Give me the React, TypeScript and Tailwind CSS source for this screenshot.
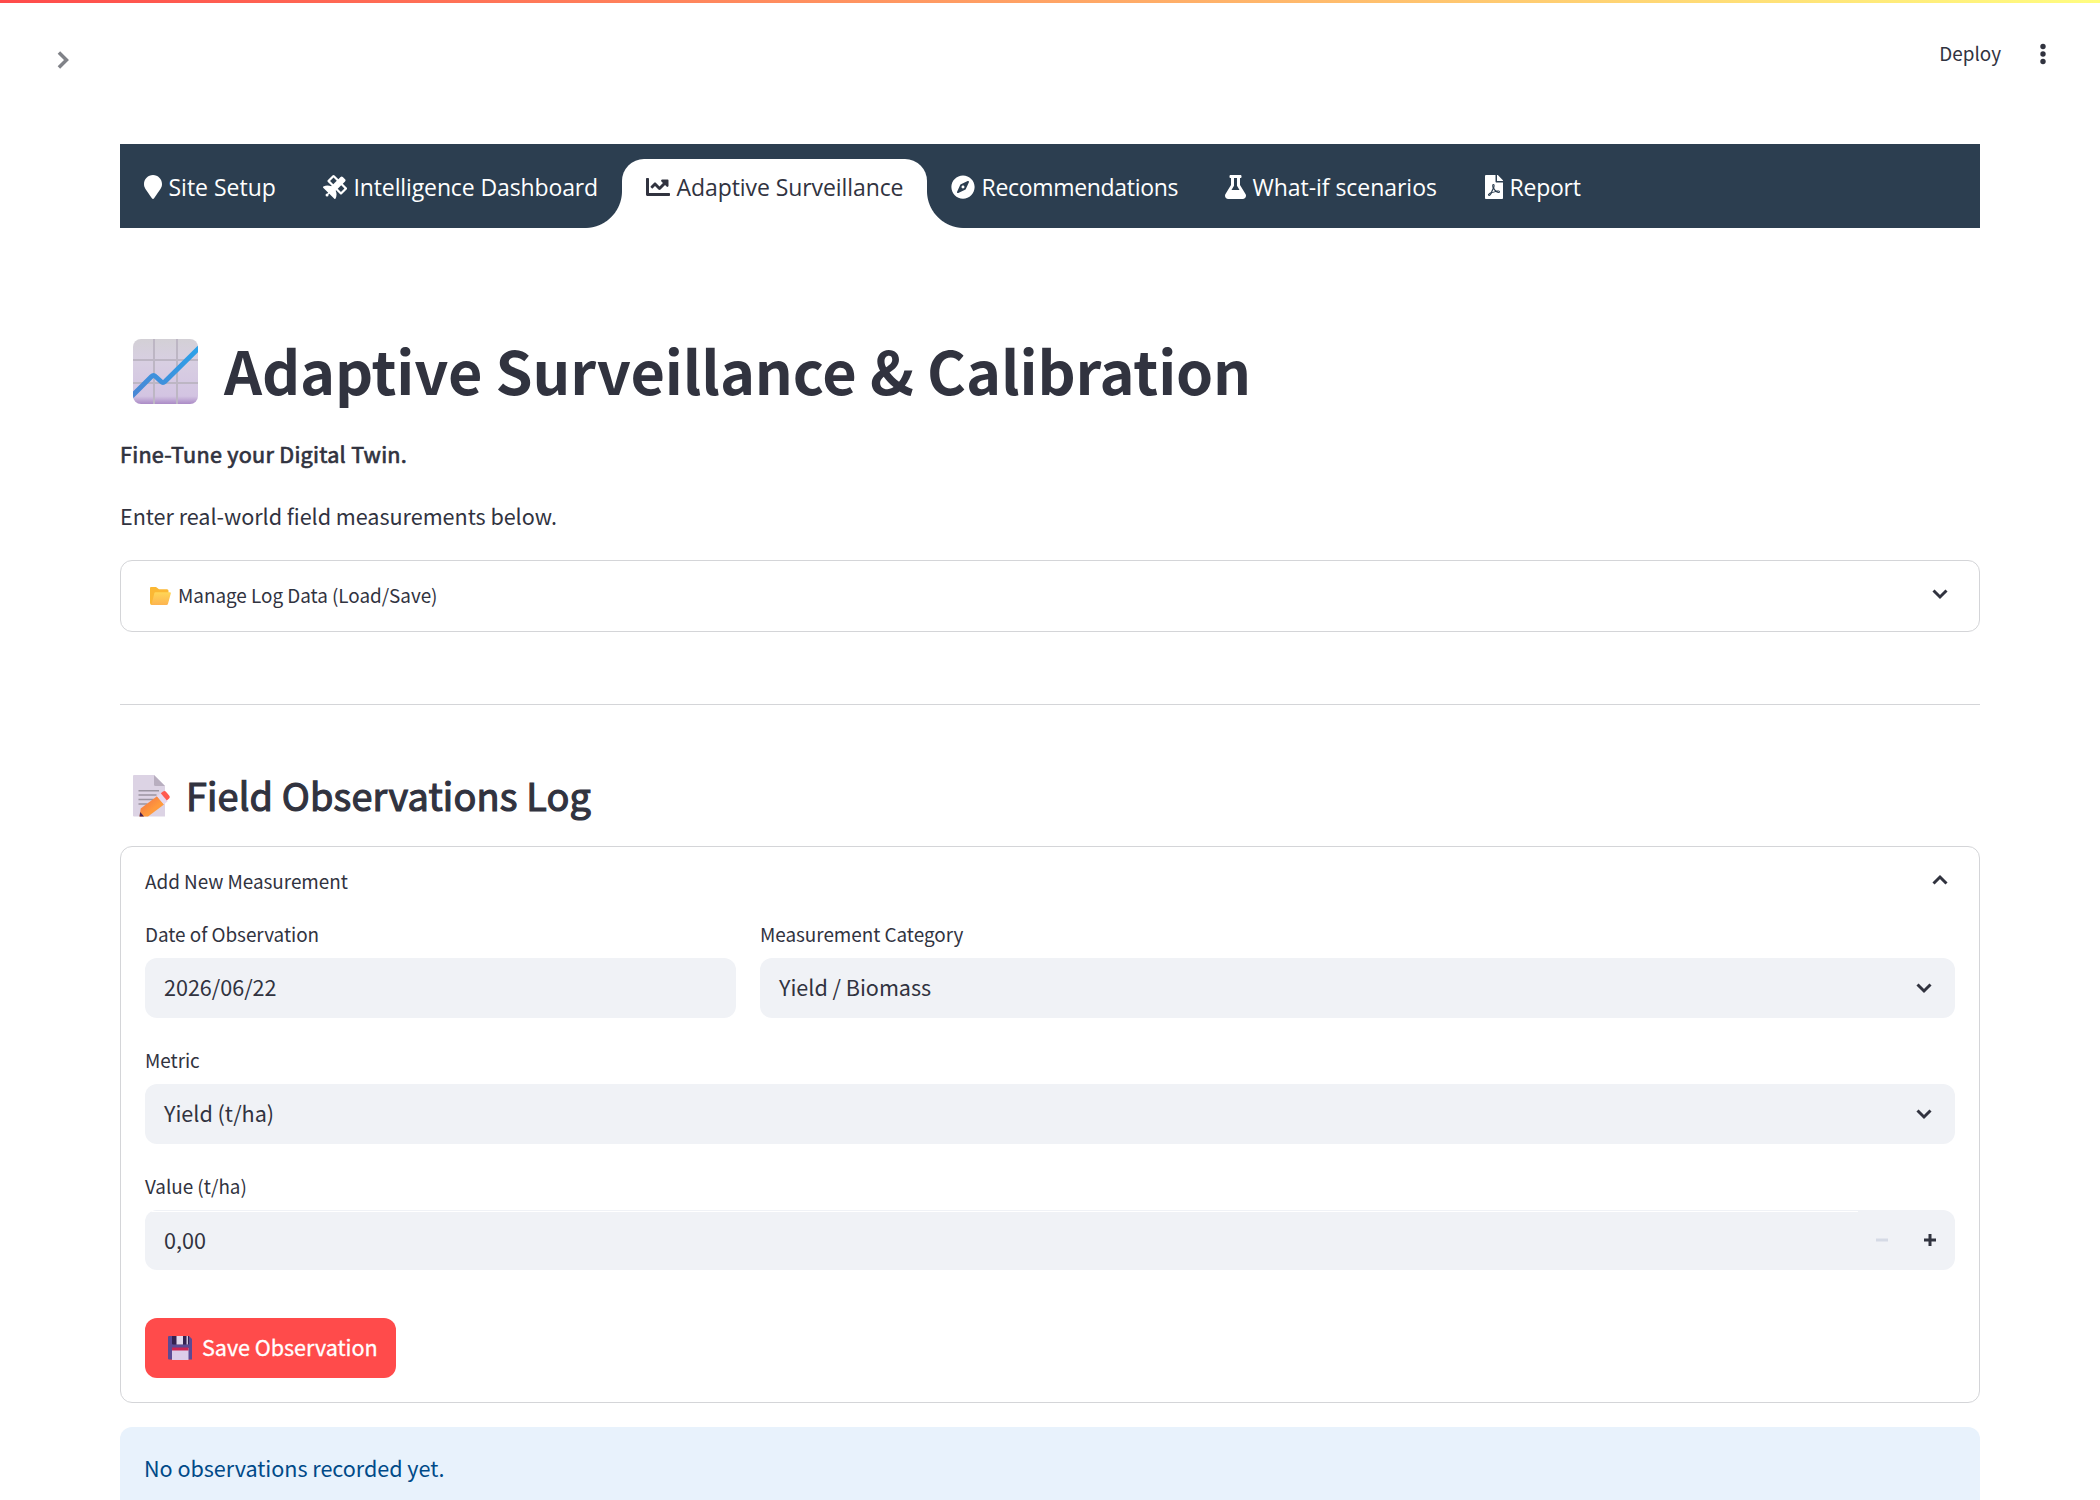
import React from "react";
import { FaChartLine, FaCompass, FaFilePdf, FaFlask, FaMapMarker, FaSatellite } from "react-icons/fa";

const tabs = [
    { label: "Site Setup", icon: FaMapMarker, iconWidth: "w-[18px]", width: "w-[179px]", tracking: "tracking-normal" },
    { label: "Intelligence Dashboard", icon: FaSatellite, iconWidth: "w-6", width: "w-[323px]", tracking: "tracking-[-0.12px]" },
    { label: "Adaptive Surveillance", icon: FaChartLine, iconWidth: "w-6", width: "w-[305px]", tracking: "tracking-[-0.08px]", active: true },
    { label: "Recommendations", icon: FaCompass, iconWidth: "w-6", width: "w-[274px]", tracking: "tracking-[-0.31px]" },
    { label: "What-if scenarios", icon: FaFlask, iconWidth: "w-[21px]", width: "w-[260px]", tracking: "tracking-[-0.04px]" },
    { label: "Report", icon: FaFilePdf, iconWidth: "w-[18px]", width: "w-[144px]", tracking: "tracking-[-0.24px]" },
];

const Chevron = ({ className = "" }: { className?: string }) => (
    <svg viewBox="0 0 24 24" className={className} fill="none" stroke="currentColor" strokeWidth="3">
        <path d="M5.5 8.5 12 15l6.5-6.5" />
    </svg>
);

const ChartIcon = () => (
    <svg width="65" height="65" viewBox="0 0 65 65">
        <defs>
            <linearGradient id="chartBg" x1="0" y1="0" x2="0" y2="1">
                <stop offset="0" stopColor="#d3d0d6" />
                <stop offset="0.35" stopColor="#d8cfe2" />
                <stop offset="0.88" stopColor="#d3c4e2" />
                <stop offset="1" stopColor="#ab8bc6" />
            </linearGradient>
            <linearGradient id="chartLine" x1="0" y1="1" x2="1" y2="0">
                <stop offset="0" stopColor="#4a86d4" />
                <stop offset="1" stopColor="#2aa3ea" />
            </linearGradient>
            <clipPath id="chartClip"><rect width="65" height="65" rx="8" /></clipPath>
        </defs>
        <g clipPath="url(#chartClip)">
            <rect width="65" height="65" fill="url(#chartBg)" />
            <path d="M21 0v65M44 0v65M0 21h65M0 44h65" stroke="#bdb6c4" strokeWidth="2" />
            <path d="M-2 58 18.500 37.500q2-2 4 0l5.500 5q2 1.800 4 0L68 7" fill="none" stroke="url(#chartLine)" strokeWidth="4.800" strokeLinejoin="round" />
        </g>
    </svg>
);

const MemoIcon = () => (
    <svg width="37" height="42" viewBox="0 0 37 42">
        <defs>
            <linearGradient id="pencil" x1="0" y1="0" x2="1" y2="1">
                <stop offset="0.2" stopColor="#f47a45" />
                <stop offset="0.6" stopColor="#ff9a3c" />
            </linearGradient>
        </defs>
        <path d="M1 0h20l11 11v30.500H1a1 1 0 0 1-1-1V1a1 1 0 0 1 1-1z" fill="#dcd3e4" />
        <path d="M21 0l11 11H22.500a1.500 1.500 0 0 1-1.500-1.500z" fill="#b8aebf" />
        <path d="M5.500 15.700h20.500M5.500 20.100h18M5.500 24.500h15M5.500 28.900h9" stroke="#9a94a0" strokeWidth="1.500" />
        <path d="M6.500 41.500l1.200-8L24 21.200l7 8.300L15 41.500z" fill="url(#pencil)" />
        <path d="M24 21.200l3.800-2.900 6.800 8-3.600 3.200z" fill="#e6d9ee" />
        <path d="M27.800 18.300l2.200-1.700a2.400 2.400 0 0 1 3.200.4l2.900 3.500a2.400 2.400 0 0 1-.3 3.300l-2 1.700z" fill="#ff5a4f" />
        <path d="M6.500 41.500l.7-4.500 3.800 4.500z" fill="#4a2350" />
    </svg>
);

const FolderIcon = () => (
    <svg width="21" height="18" viewBox="0 0 21 18">
        <defs>
            <linearGradient id="folder" x1="0" y1="0" x2="0" y2="1">
                <stop offset="0" stopColor="#ffd657" />
                <stop offset="1" stopColor="#fdb450" />
            </linearGradient>
        </defs>
        <path d="M0 1a1 1 0 0 1 1-1h5l3 2.300h8a1.500 1.500 0 0 1 1.500 1.500V8L2 18a2 2 0 0 1-2-2z" fill="#fbb834" />
        <path d="M5.500 5.200h14.300a1 1 0 0 1 1 1.300L18 16.800A1.600 1.600 0 0 1 16.500 18H1.500L4.300 6.200a1.300 1.300 0 0 1 1.200-1z" fill="url(#folder)" />
    </svg>
);

const FloppyIcon = () => (
    <svg width="24" height="24" viewBox="0 0 24 24">
        <path d="M1 0h20l3 3v20.500H1a1 1 0 0 1-1-1V1a1 1 0 0 1 1-1z" fill="#5b4a94" />
        <path d="M4 0h17v7.500a1 1 0 0 1-1 1H5a1 1 0 0 1-1-1z" fill="#33214f" />
        <path d="M8.500 0H15v8.500H8.500z" fill="#e2d8ec" />
        <path d="M18.500 0h1.500v8.500h-1.500z" fill="#cfc4de" />
        <path d="M4 12h16.500v12H4z" fill="#dccde9" />
        <path d="M4 11.500h16.500v3H4z" fill="#cf2350" />
    </svg>
);

const Select = ({ value }: { value: string }) => (
    <div className="flex h-[60px] items-center justify-between rounded-xl bg-[#f0f2f6] pr-[19px] pl-[19px]">
        <span className="pb-0.5 text-[21.6px] leading-9">{value}</span>
        <Chevron className="size-6" />
    </div>
);

const App = () => {
    return (
        <div className="flex h-[1500px] w-[2100px] flex-col overflow-hidden bg-white font-['Noto_Sans_CJK_SC',sans-serif] text-[21.6px] text-[#31333f]">
            <div className="h-[3px] shrink-0 bg-[linear-gradient(90deg,#ff4b4b,#fffd80)]" />
            <header className="flex h-[141px] shrink-0 items-start justify-between pt-8 pr-[45px] pl-[49px]">
                <Chevron className="mt-[11px] size-7 -rotate-90 text-[#808288]" />
                <div className="flex items-center">
                    <span className="pb-0.5 text-[18.9px] leading-9">Deploy</span>
                    <svg width="24" height="36" viewBox="0 0 24 36" className="ml-[30px]" fill="currentColor">
                        <circle cx="12" cy="10.500" r="2.700" />
                        <circle cx="12" cy="18" r="2.700" />
                        <circle cx="12" cy="25.500" r="2.700" />
                    </svg>
                </div>
            </header>

            <main className="mx-[120px] flex flex-col">
                <nav className="flex h-[84px] items-end bg-[#2c3e50] font-['Open_Sans',sans-serif] text-[23px] text-white">
                    {tabs.map((tab) => (
                        <div
                            key={tab.label}
                            className={`relative flex h-[69px] items-start pt-4 pl-6 ${tab.width} ${tab.active ? "rounded-t-[22px] bg-white text-[#31333f]" : ""}`}
                        >
                            {tab.active && (
                                <>
                                    <span className="absolute bottom-0 -left-[37px] size-[37px] bg-[radial-gradient(circle_at_0_0,transparent_36.5px,white_37.5px)]" />
                                    <span className="absolute -right-[37px] bottom-0 size-[37px] bg-[radial-gradient(circle_at_100%_0,transparent_36.5px,white_37.5px)]" />
                                </>
                            )}
                            <tab.icon className={`h-6 shrink-0 ${tab.iconWidth}`} />
                            <span className={`ml-[6.5px] leading-6 whitespace-nowrap ${tab.tracking}`}>{tab.label}</span>
                        </div>
                    ))}
                </nav>

                <h1 className="mt-[101px] flex h-[84px] items-center pl-[13px] text-[59.4px] leading-[84px] font-bold tracking-[-0.13px]">
                    <ChartIcon />
                    <span className="ml-[26px] pb-1">Adaptive Surveillance &amp; Calibration</span>
                </h1>
                <p className="mt-[23px] leading-9 tracking-[0.28px] [-webkit-text-stroke:0.7px]">Fine-Tune your Digital Twin.</p>
                <p className="mt-[26px] leading-9 tracking-[-0.04px]">Enter real-world field measurements below.</p>

                <div className="mt-[26px] flex h-[72px] items-center rounded-xl border border-[#d4d5d8] pr-[27px] pl-[29px] text-[18.9px]">
                    <FolderIcon />
                    <span className="ml-[7px] flex-1 pb-0.5 tracking-[-0.03px]">Manage Log Data (Load/Save)</span>
                    <Chevron className="mb-1 size-6" />
                </div>

                <hr className="mt-[72px] border-[#d4d5d8]" />

                <h2 className="mt-[63px] flex h-[56px] items-center pl-[13px] text-[37.8px] leading-[56px] tracking-[0.17px] [-webkit-text-stroke:1.2px]">
                    <MemoIcon />
                    <span className="ml-4 pb-0.5">Field Observations Log</span>
                </h2>

                <section className="mt-[22px] h-[557px] rounded-xl border border-[#d4d5d8] px-6 text-[18.9px] tracking-[-0.03px]">
                    <div className="mt-[16px] flex h-9 items-center justify-between">
                        <span>Add New Measurement</span>
                        <Chevron className="mr-[3px] mb-[3px] size-6 rotate-180" />
                    </div>
                    <div className="mt-[17px] flex gap-6">
                        <div className="w-[591px]">
                            <div className="h-[42px] leading-[36px]">Date of Observation</div>
                            <div className="flex h-[60px] items-center rounded-xl bg-[#f0f2f6] pb-0.5 pl-[19px] text-[21.6px]">2026/06/22</div>
                        </div>
                        <div className="flex-1">
                            <div className="h-[42px] leading-[36px]">Measurement Category</div>
                            <Select value="Yield / Biomass" />
                        </div>
                    </div>
                    <div className="mt-[24px]">
                        <div className="h-[42px] leading-[36px]">Metric</div>
                        <Select value="Yield (t/ha)" />
                    </div>
                    <div className="mt-[24px]">
                        <div className="h-[42px] leading-[36px]">Value (t/ha)</div>
                        <div className="flex h-[60px] overflow-hidden rounded-xl bg-[#f0f2f6] pr-px">
                            <div className="mt-px flex-1 border-t border-white pl-[19px] text-[21.6px] leading-[56px]">0,00</div>
                            <div className="flex w-12 items-center justify-center text-[#d5dae5]">
                                <svg width="12" height="12" viewBox="0 0 12 12"><path d="M0 6h12" stroke="currentColor" strokeWidth="3" /></svg>
                            </div>
                            <div className="flex w-12 items-center justify-center">
                                <svg width="12" height="12" viewBox="0 0 12 12"><path d="M0 6h12M6 0v12" stroke="currentColor" strokeWidth="3" /></svg>
                            </div>
                        </div>
                    </div>
                    <button className="mt-12 flex h-[60px] w-[251px] items-center rounded-xl bg-[#ff4b4b] pl-[23px] text-[21.6px] text-white">
                        <FloppyIcon />
                        <span className="ml-[10px] pb-0.5 tracking-[-0.05px] [-webkit-text-stroke:0.3px]">Save Observation</span>
                    </button>
                </section>

                <div className="mt-6 h-[84px] rounded-xl bg-[#e8f2fc] px-6 pt-[23px] leading-9 tracking-[-0.04px] text-[#004a88]">No observations recorded yet.</div>
            </main>
        </div>
    );
};

export default App;
